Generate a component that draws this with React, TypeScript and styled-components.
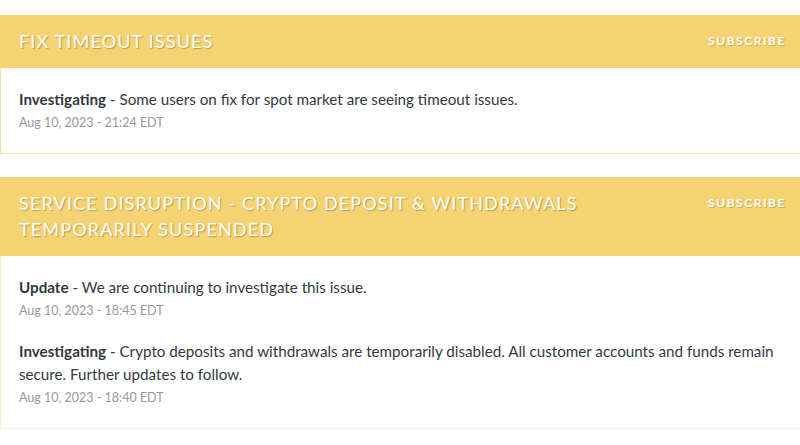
import React, { FC } from 'react';
import styled, { createGlobalStyle } from 'styled-components';

const GlobalStyle = createGlobalStyle`
  html, body {
    margin: 0;
    padding: 0;
    background: #ffffff;
    overflow: hidden;
  }
  body {
    font-family: 'Lato', 'Open Sans', sans-serif;
    color: #333842;
  }
`;

interface IUpdate {
  status: string;
  body: string;
  stamp: string;
}

interface IIncident {
  title: string;
  faded?: boolean;
  updates: IUpdate[];
}

const incidents: IIncident[] = [
  {
    title: 'Fix timeout issues',
    updates: [
      {
        status: 'Investigating',
        body: 'Some users on fix for spot market are seeing timeout issues.',
        stamp: 'Aug 10, 2023 - 21:24 EDT',
      },
    ],
  },
  {
    title: 'Service Disruption - Crypto Deposit & Withdrawals Temporarily Suspended',
    faded: true,
    updates: [
      {
        status: 'Update',
        body: 'We are continuing to investigate this issue.',
        stamp: 'Aug 10, 2023 - 18:45 EDT',
      },
      {
        status: 'Investigating',
        body:
          'Crypto deposits and withdrawals are temporarily disabled. All customer accounts and funds remain secure. Further updates to follow.',
        stamp: 'Aug 10, 2023 - 18:40 EDT',
      },
    ],
  },
];

const Page = styled.div`
  display: flex;
  flex-direction: column;
  gap: 23px;
  padding-top: 15px;
  width: 802px;
`;

const Card = styled.section<{ $faded?: boolean }>`
  display: flex;
  flex-direction: column;
  border: 1px solid ${(p) => (p.$faded ? '#fcecc6' : '#f8df9c')};
  border-top: none;
`;

const Header = styled.header`
  display: flex;
  align-items: flex-start;
  justify-content: space-between;
  gap: 40px;
  background: #f5d372;
  margin: 0 -1px;
  padding: 13px 16px 14px 19px;
`;

const Title = styled.h2`
  margin: 0;
  max-width: 580px;
  font-family: 'Lato', sans-serif;
  font-weight: 400;
  font-size: 18px;
  line-height: 26px;
  letter-spacing: 1.15px;
  text-transform: uppercase;
  color: #ffffff;
  text-shadow: 1px 1px 1px rgba(90, 70, 20, 0.4);
`;

const Subscribe = styled.a`
  flex-shrink: 0;
  margin-top: 4px;
  font-size: 12px;
  font-weight: 700;
  line-height: 18px;
  letter-spacing: 1.55px;
  text-transform: uppercase;
  color: #ffffff;
  text-shadow: 1px 1px 1px rgba(90, 70, 20, 0.3);
  cursor: pointer;
`;

const Body = styled.div`
  display: flex;
  flex-direction: column;
  gap: 18px;
  padding: 20px 19px 19px 18px;
`;

const Update = styled.div`
  display: flex;
  flex-direction: column;
`;

const Message = styled.p`
  margin: 0;
  max-width: 765px;
  font-size: 15.2px;
  line-height: 23px;
  color: #333842;

  strong {
    font-weight: 700;
  }
`;

const Stamp = styled.small`
  font-size: 12.5px;
  line-height: 23px;
  color: #999999;
`;

const IncidentCard: FC<{ incident: IIncident }> = ({ incident }) => (
  <Card $faded={incident.faded}>
    <Header>
      <Title>{incident.title}</Title>
      <Subscribe>Subscribe</Subscribe>
    </Header>
    <Body>
      {incident.updates.map((u) => (
        <Update key={u.stamp}>
          <Message>
            <strong>{u.status}</strong> - {u.body}
          </Message>
          <Stamp>{u.stamp}</Stamp>
        </Update>
      ))}
    </Body>
  </Card>
);

export default function App() {
  return (
    <>
      <GlobalStyle />
      <Page>
        {incidents.map((i) => (
          <IncidentCard key={i.title} incident={i} />
        ))}
      </Page>
    </>
  );
}
